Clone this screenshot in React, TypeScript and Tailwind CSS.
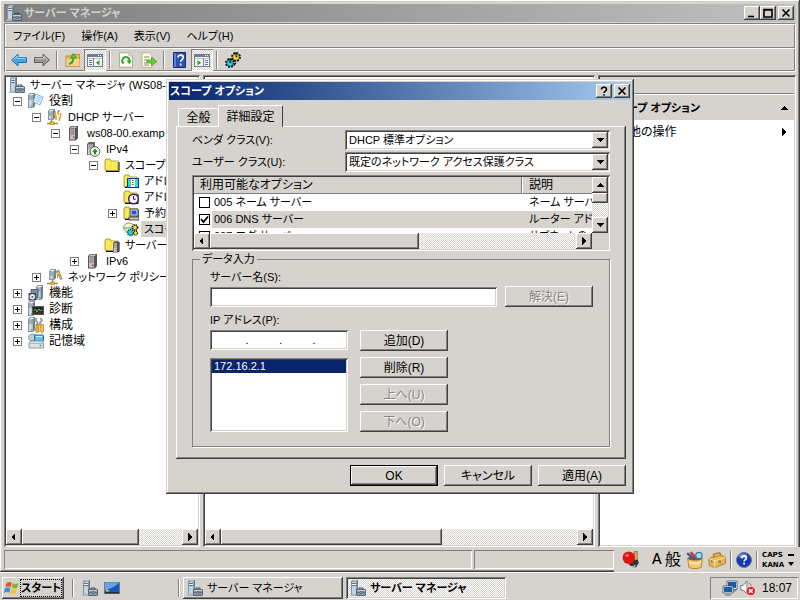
import { useState } from 'react';
import type { ReactNode } from 'react';
import clsx from 'clsx';

// Classic bevels
const RAISED = 'bg-[#d6d3ce] shadow-[inset_-1px_-1px_0_#404040,inset_1px_1px_0_#fff,inset_-2px_-2px_0_#808080]';
const SUNKEN = 'shadow-[inset_1px_1px_0_#808080,inset_-1px_-1px_0_#fff,inset_2px_2px_0_#404040,inset_-2px_-2px_0_#d6d3ce]';
const THIN_SUNKEN = 'shadow-[inset_1px_1px_0_#808080,inset_-1px_-1px_0_#fff]';
const DITHER = 'bg-[conic-gradient(#fff_25%,#d6d3ce_0_50%,#fff_0_75%,#d6d3ce_0)] bg-[length:2px_2px]';

/* ---------- icons ---------- */

function Svg({ children, size = 16 }: { children: ReactNode; size?: number }) {
  return (
    <svg width={size} height={size} viewBox="0 0 16 16" className="shrink-0" aria-hidden="true">
      {children}
    </svg>
  );
}

// Small tower shared by most of the tree icons
function Tower({ x = 0, y = 0, h = 14 }: { x?: number; y?: number; h?: number }) {
  return (
    <g transform={`translate(${x} ${y})`}>
      <path d={`M0 2l2-2h5v${h - 2}l-2 2H0z`} fill="#6f7f8c" />
      <path d={`M.7 2.3h4v${h - 3}h-4z`} fill="#c9d5dd" />
      <path d="M1 2l1.4-1.3h4L5 2z" fill="#eef4f8" />
      <path d="M1 4h3.5M1 6h3.5" stroke="#5d7080" strokeWidth=".8" />
      <path d={`M3 ${h - 3}h1.5v1.5H3z`} fill="#3ccf2c" />
    </g>
  );
}

function ServerManagerIcon() {
  return (
    <Svg>
      <path d="M1 1.500L2.500 0H8v13l-1.500 1.500H1z" fill="#66798a" />
      <path d="M1.700 2h4.600v12H1.700z" fill="#c3d3df" />
      <path d="M2 1.500L3 .6h4.300l-1 .9z" fill="#f2f7fa" />
      <path d="M2.200 3.500h3.600M2.200 5.500h3.600" stroke="#4e6f8c" />
      <path d="M2.200 4.500h3.600" stroke="#f2f7fa" />
      <path d="M0 15l1.500-1.200H8V16H0z" fill="#aab8c3" />
      <path d="M9 9.500V8h4v1.500" fill="none" stroke="#3d4952" />
      <rect x="6.500" y="9.500" width="9" height="6" rx=".6" fill="#8499a9" stroke="#43525e" strokeWidth=".8" />
      <path d="M7 10.500h8" stroke="#c8d5de" />
      <path d="M7 12.500h8" stroke="#56697a" strokeWidth=".8" />
      <path d="M10.200 11.500h1.600v2h-1.600z" fill="#f0f3f5" stroke="#2d363d" strokeWidth=".6" />
    </Svg>
  );
}

function RolesIcon() {
  return (
    <Svg>
      <Tower h={15} />
      <path d="M8 1l7 3-3 8-7-3z" fill="#e4f1fb" stroke="#6aa5d4" strokeWidth=".8" />
      <path d="M9 3.500l4 1.700M8.300 5.300l4 1.700M7.600 7.200l4 1.700" stroke="#7db3de" strokeWidth=".8" />
    </Svg>
  );
}

function DhcpIcon() {
  return (
    <Svg>
      <Tower x={1} h={11} />
      <path d="M8 2v4l1 1v4M11 2v4M13.500 4v4l-1 1v3" stroke="#e79a22" strokeWidth="1.600" fill="none" />
      <path d="M7 1v3M12 1v2" stroke="#70787e" />
      <path d="M4.500 11v3M0 14.500h11" stroke="#b48a35" strokeWidth="1.400" />
      <rect x="3" y="13" width="4" height="3" fill="#f4c44c" stroke="#8b6a20" strokeWidth=".6" />
    </Svg>
  );
}

function HostIcon() {
  return (
    <Svg>
      <path d="M3 3l2-2h7v12l-2 2.500H3z" fill="#555" />
      <path d="M4 3.500h5v11H4z" fill="#c3c3c3" />
      <path d="M4.300 2.800L5.500 1.700h5.500L9.800 2.800z" fill="#ededed" />
      <path d="M4.500 5h4M4.500 7h4M4.500 9h4" stroke="#555" strokeWidth=".8" />
      <path d="M7 11.500h1.500V13H7z" fill="#e01818" />
    </Svg>
  );
}

function IPv4Icon() {
  return (
    <Svg>
      <path d="M2 3l2-2h6v11l-1 2H2z" fill="#666" />
      <path d="M3 3.500h5v10H3z" fill="#cfcfcf" />
      <path d="M3.500 5h4M3.500 7h4" stroke="#666" strokeWidth=".8" />
      <circle cx="10" cy="10.500" r="4.800" fill="#fff" stroke="#444" strokeWidth=".9" />
      <path d="M10 7.500l3 3.200h-1.800v2.600H8.800v-2.600H7z" fill="#14912a" />
    </Svg>
  );
}

function Folder() {
  return (
    <g>
      <path d="M1 4l1-2h4l1 2h7v9.500H1z" fill="#f5e54a" stroke="#9a8d20" strokeWidth=".8" />
      <path d="M2 5h11M2 7h11M2 9h11M2 11h11" stroke="#fffbb0" strokeWidth=".8" strokeDasharray="1 1" />
      <path d="M15 5v9.500H2" fill="none" stroke="#000" />
    </g>
  );
}

function FolderIcon() {
  return <Svg><Folder /></Svg>;
}

function PoolIcon() {
  return (
    <Svg>
      <Folder />
      <rect x="4.500" y="5.500" width="11" height="9" fill="#27d6ee" stroke="#123a8a" />
      <path d="M8 6v8h4V6z" fill="#fff" />
      <path d="M9 7.500h2M9 9.500h2M9 11.500h2" stroke="#c22" strokeDasharray="1 .5" />
    </Svg>
  );
}

function LeaseIcon() {
  return (
    <Svg>
      <Folder />
      <circle cx="10.500" cy="10" r="4.800" fill="#fff" stroke="#3a1470" strokeWidth="1.400" />
      <path d="M10.500 7v3.200h2.300" fill="none" stroke="#222" />
    </Svg>
  );
}

function ReservationIcon() {
  return (
    <Svg>
      <Folder />
      <rect x="7" y="4" width="8" height="7" fill="#e4e4e4" stroke="#222" strokeWidth=".8" />
      <rect x="8.500" y="5.500" width="5" height="4" fill="#1f54d8" />
      <path d="M6 12h10v3H6z" fill="#ccc" stroke="#222" strokeWidth=".8" />
    </Svg>
  );
}

function OptionsIcon() {
  return (
    <Svg>
      <ellipse cx="6" cy="6.500" rx="5.500" ry="4.500" fill="#f6f2c4" stroke="#777" strokeWidth=".8" />
      <path d="M1 7h9" stroke="#3a9" />
      <circle cx="12" cy="6.500" r="2.600" fill="#f2dc1c" stroke="#000" strokeWidth="1.600" strokeDasharray="1.200 .9" />
      <circle cx="7.500" cy="11.500" r="3" fill="#22cfe8" stroke="#0a3d55" strokeWidth="1.600" strokeDasharray="1.300 .9" />
      <circle cx="12.500" cy="12" r="2" fill="#f2dc1c" stroke="#000" strokeWidth="1.200" strokeDasharray="1 .8" />
    </Svg>
  );
}

function ServerFolderIcon() {
  return (
    <Svg>
      <Folder />
      <path d="M9 6l1.500-1.500H15V13l-1.500 2.500H9z" fill="#555" />
      <path d="M9.800 6.300h3v8.500h-3z" fill="#d6d6d6" />
      <path d="M10 8h2.600M10 10h2.600" stroke="#555" strokeWidth=".8" />
      <path d="M11.500 12h1v1h-1z" fill="#e01818" />
    </Svg>
  );
}

function PolicyIcon() {
  return (
    <Svg>
      <Tower x={2} h={11} />
      <path d="M9 3l3-1 3 8-1.500.5L11 5l-.5 4" fill="#e8c071" stroke="#9b6a26" strokeWidth=".7" />
      <path d="M7 5l5-4" stroke="#5a95c8" strokeWidth="1.300" />
      <path d="M5.500 11v3M0 14.500h11" stroke="#b48a35" strokeWidth="1.400" />
      <rect x="4" y="13" width="3.500" height="3" fill="#f4c44c" stroke="#8b6a20" strokeWidth=".6" />
    </Svg>
  );
}

function FeaturesIcon() {
  return (
    <Svg>
      <Tower x={8} h={15} />
      <path d="M3 4.500h7v8H3z" fill="#7b8ca8" stroke="#3f4f6b" strokeWidth=".8" />
      <path d="M.5 8h7.500v7.500H.5z" fill="#444c5a" />
      <circle cx="4.300" cy="11.800" r="2.700" fill="#e8e8ee" />
      <circle cx="4.300" cy="11.800" r=".9" fill="#444" />
    </Svg>
  );
}

function DiagnosticsIcon() {
  return (
    <Svg>
      <Tower h={15} />
      <rect x="4.500" y="5.500" width="11" height="8" fill="#1b2b20" stroke="#565656" />
      <path d="M5.500 10l2-2 1.500 3 2-3 1.500 2 2-1" fill="none" stroke="#4fc94e" />
      <path d="M5.500 12h9" stroke="#b33" strokeWidth=".6" />
    </Svg>
  );
}

function ConfigIcon() {
  return (
    <Svg>
      <Tower h={15} />
      <path d="M8 1v3l1.500 1V8M12 1l2 2-2 3v2" fill="none" stroke="#8a959e" strokeWidth="1.700" />
      <path d="M8 7.500h3v7l-1 1H8.500l-.8-1z" fill="#f0a724" stroke="#a3680e" strokeWidth=".6" />
      <path d="M12.500 7.500h3v7l-1 1H13l-.8-1z" fill="#f7c651" stroke="#a3680e" strokeWidth=".6" />
    </Svg>
  );
}

function StorageIcon() {
  return (
    <Svg>
      <ellipse cx="5" cy="4.500" rx="4.500" ry="3.500" fill="#c4ccd4" stroke="#7a8894" strokeWidth=".8" />
      <rect x="6.500" y="2" width="9" height="6.500" rx="1" fill="#5ec1f0" stroke="#1f6b9d" />
      <path d="M8 3.500h6" stroke="#d9f3ff" />
      <path d="M1 10l2-2h11l1.500 2v5H1z" fill="#dfe4e8" stroke="#77838d" strokeWidth=".8" />
      <path d="M1.500 10.500h14" stroke="#919da7" strokeWidth=".6" />
      <path d="M11.500 12.500h2" stroke="#2dbd2d" strokeWidth="1.500" />
    </Svg>
  );
}

function BackIcon() {
  return (
    <Svg>
      <path d="M.6 8L7 2v3.500h8.500v5H7V14z" fill="#3ea7e6" stroke="#1668ae" strokeWidth=".9" strokeLinejoin="round" />
      <path d="M2.300 7.700L6.200 4v2.300h8.500" fill="none" stroke="#a4dcfb" />
    </Svg>
  );
}

function ForwardIcon() {
  return (
    <Svg>
      <path d="M15.400 8L9 2v3.500H.5v5H9V14z" fill="#999" stroke="#555" strokeWidth=".9" strokeLinejoin="round" />
      <path d="M1.300 6.400h8.500V4l4 3.800" fill="none" stroke="#ccc" />
    </Svg>
  );
}

function UpFolderIcon() {
  return (
    <Svg>
      <path d="M1 4h5l1-1.500h7.500V14.500H1z" fill="#efbb5c" stroke="#b98123" strokeWidth=".8" />
      <path d="M1.500 7h13v7.200h-13z" fill="#f8d48a" />
      <path d="M4 12c3.500-1 4.500-3 4.300-6" fill="none" stroke="#3aa81c" strokeWidth="2" />
      <path d="M5 6.500L8.500 1.500l3.500 4.300z" fill="#52cc2b" stroke="#2d8a12" strokeWidth=".6" />
    </Svg>
  );
}

// Window with a narrow tree pane on the left and an arrow in the right part
function PaneIcon({ flip }: { flip?: boolean }) {
  return (
    <Svg>
      <g shapeRendering="crispEdges">
        <rect x=".5" y="2.500" width="15" height="12" fill="#f6f6f6" stroke="#777f8c" />
        <path d="M1 3h14v2H1z" fill="#6d7b93" />
        <path d="M11 3h1v1h-1zM13 3h1v1h-1z" fill="#fff" />
        <path d="M1 6.500h14" stroke="#b9bfc9" />
      </g>
      <g transform={flip ? 'translate(16 0) scale(-1 1)' : undefined}>
        <path d="M6.500 6v8.500" stroke="#777f8c" />
        <path d="M2 8.500h3M2 10.500h3M2 12.500h3" stroke="#4f7ab4" />
        <path d="M12.500 8v5.500L9 10.700z" fill="#27a321" />
      </g>
    </Svg>
  );
}

function RefreshIcon() {
  return (
    <Svg>
      <path d="M1.500.8h9.700l3.300 3.200v11.200h-13z" fill="#fdfdf6" stroke="#a9a48d" strokeWidth=".9" />
      <path d="M11 .8V4h3.500" fill="#e5e2d2" stroke="#a9a48d" strokeWidth=".7" />
      <path d="M5.600 11.500A3.600 3.600 0 1 1 11.300 9.800" fill="none" stroke="#31a82b" strokeWidth="2" />
      <path d="M8.500 8.500h5L11.500 12.500z" fill="#31a82b" />
    </Svg>
  );
}

function ExportIcon() {
  return (
    <Svg>
      <path d="M1 .8h7.500L11 3.500v11.700H1z" fill="#fffbe6" stroke="#b9ad80" strokeWidth=".9" />
      <path d="M3 5h5.500M3 8h3M3 11h3M3 13h5" stroke="#8d8b7a" />
      <path d="M6 8h4.500V5.300L15.700 9.500l-5.200 4.200V11H6z" fill="#69cf3f" stroke="#34901a" strokeWidth=".7" />
    </Svg>
  );
}

function HelpBookIcon() {
  return (
    <Svg>
      <path d="M1.500.5h12v15h-12z" fill="#2c4fb8" stroke="#142c77" />
      <path d="M2 1h2v14H2z" fill="#5d82e0" />
      <path d="M6 5.500C6 2.200 11.300 2.300 11.300 5.500c0 2-2.600 2.100-2.600 4.300M8.700 11.500v2" fill="none" stroke="#fff" strokeWidth="1.700" />
    </Svg>
  );
}

function GearsIcon() {
  return (
    <Svg>
      <circle cx="11" cy="5" r="3.700" fill="none" stroke="#000" strokeWidth="2.400" strokeDasharray="1.600 1.300" />
      <circle cx="11" cy="5" r="3.300" fill="#f4e11a" stroke="#000" strokeWidth=".5" />
      <path d="M11 0v5l1.500-1" fill="none" stroke="#000" />
      <circle cx="5" cy="11" r="3.700" fill="none" stroke="#000" strokeWidth="2.400" strokeDasharray="1.600 1.300" />
      <circle cx="5" cy="11" r="3.300" fill="#25d3e8" stroke="#000" strokeWidth=".5" />
      <path d="M5 6v5l1.500-1M11 10.500l-2 3.500" fill="none" stroke="#000" />
    </Svg>
  );
}

function WindowsFlag() {
  return (
    <Svg>
      <path d="M2.500 3C4.500 1.500 6 1.800 7.800 2.800L6.700 7.300C5 6.300 3.300 6.300 1.300 7.300z" fill="#e8562a" />
      <path d="M8.700 3.200c2 1 3.600.9 5.800-.3l-1.200 4.500c-1.900 1.200-3.700 1.200-5.700.2z" fill="#7cb928" />
      <path d="M1 8.300c2-1.200 3.600-1 5.400 0L5.300 12.800C3.700 11.800 2 11.800 0 12.900z" fill="#3c8fd8" />
      <path d="M7.300 8.700c2 1 3.600 1 5.700-.2l-1.200 4.600c-2 1.200-3.800 1.200-5.700.1z" fill="#f9c325" />
    </Svg>
  );
}

function DesktopIcon() {
  return (
    <Svg>
      <rect x=".5" y="2.500" width="15" height="11" fill="#1c56b8" stroke="#6f7780" />
      <path d="M1 10c5-1 9-3 14-7v-.5H1z" fill="#5fa6ee" />
      <path d="M1 12h14v1.500H1z" fill="#232d3a" />
      <path d="M2 9.500h2v2H2z" fill="#f7c522" />
      <path d="M4 10h1.500v1.500H4z" fill="#6bc53c" />
    </Svg>
  );
}

function BrushIcon() {
  return (
    <Svg size={18}>
      <path d="M11 .5h2.500v7.500H11z" fill="#e1b65a" stroke="#6b4a14" strokeWidth=".6" />
      <path d="M10 8h4l1 2.500-2.500 4H9L6 12z" fill="#333" />
      <path d="M6 12.500c2 2 4.500 2 6 0" stroke="#ccc" fill="none" />
      <circle cx="6" cy="6" r="5.500" fill="#e11414" />
      <ellipse cx="4.500" cy="4" rx="1.800" ry="1.200" fill="#f77" />
    </Svg>
  );
}

function PenPotIcon() {
  return (
    <Svg size={18}>
      <path d="M1.500 6.500l1 8c3 1.500 8 1.500 11 0l1-8z" fill="#f6c877" stroke="#b57a22" strokeWidth=".8" />
      <ellipse cx="8" cy="6.500" rx="6.500" ry="2" fill="#8c5b19" />
      <path d="M1 2l7 5.500" stroke="#2b56c4" strokeWidth="2" />
      <path d="M4 1l6 6" stroke="#d4371d" strokeWidth="2" />
      <circle cx="11.500" cy="4" r="2.800" fill="#9fdcf8" stroke="#3577a8" />
      <path d="M2.500 10c3 1.200 8 1.200 11 0" stroke="#fff0c8" fill="none" />
    </Svg>
  );
}

function ToolboxIcon() {
  return (
    <Svg size={18}>
      <path d="M5 5V3l5-1.500 1 .8V4" fill="none" stroke="#b6781b" strokeWidth="1.300" />
      <path d="M.8 6.500L11 3.500l4.500 2V11L6 14.800l-5-2z" fill="#f0b44c" stroke="#b6781b" strokeWidth=".8" />
      <path d="M.8 6.500L6 8.800l9.500-3.300M6 8.800v6" fill="none" stroke="#fbe0a0" />
      <path d="M9.500 8h2v2.800h-2z" fill="#8c8c8c" />
      <path d="M2.500 8h1.500v2.500H2.500z" fill="#8c8c8c" />
    </Svg>
  );
}

function HelpBallIcon() {
  return (
    <Svg>
      <circle cx="8" cy="8" r="7.500" fill="#1437b8" stroke="#71767e" />
      <ellipse cx="7" cy="4" rx="4.500" ry="2.500" fill="#5f83e8" />
      <path d="M5.700 6.200C5.700 3.200 10.400 3.300 10.400 6c0 1.600-2.300 1.800-2.300 3.500M8.100 10.800v1.800" fill="none" stroke="#fff" strokeWidth="1.700" />
    </Svg>
  );
}

function NetworkIcon() {
  return (
    <Svg>
      <rect x="5.500" y="1.500" width="9" height="7" fill="#1a5c9e" stroke="#fff" />
      <path d="M5 1h10v8.500H5zM8 11h6" fill="none" stroke="#174066" strokeWidth=".7" />
      <rect x="1.500" y="6.500" width="9" height="6" fill="#1a5c9e" stroke="#fff" />
      <path d="M1 6h10v7H1zM3 15h6" fill="none" stroke="#174066" strokeWidth=".7" />
    </Svg>
  );
}

function MutedIcon() {
  return (
    <Svg>
      <path d="M.8 5.500H3L7 1v13L3 10H.8z" fill="#f4f4f4" stroke="#666" strokeWidth=".8" />
      <path d="M9 3c1.500 1 2 2 2.300 3.500" fill="none" stroke="#777" />
      <circle cx="10.800" cy="11" r="4.600" fill="#dc2727" stroke="#fff" strokeWidth=".5" />
      <path d="M9 9.200l3.600 3.600M12.600 9.200L9 12.800" stroke="#fff" strokeWidth="1.500" />
    </Svg>
  );
}

function Arrow({ dir }: { dir: 'left' | 'right' | 'up' | 'down' }) {
  const d = {
    left: 'M5 0v8L1 4z',
    right: 'M2 0v8l4-4z',
    up: 'M0 6h8L4 2z',
    down: 'M0 2h8L4 6z',
  }[dir];
  return (
    <svg width="8" height="8" viewBox="0 0 8 8" aria-hidden="true" shapeRendering="crispEdges">
      <path d={d} fill="#000" />
    </svg>
  );
}

/* ---------- small parts ---------- */

function ArrowButton({ dir, label }: { dir: 'left' | 'right' | 'up' | 'down'; label: string }) {
  return (
    <button type="button" aria-label={label} className={clsx('flex size-4 shrink-0 items-center justify-center', RAISED)}>
      <Arrow dir={dir} />
    </button>
  );
}

function HScroll({ thumb }: { thumb: string }) {
  return (
    <div className={clsx('flex h-4 shrink-0', DITHER)}>
      <ArrowButton dir="left" label="左へスクロール" />
      <div className="flex-1">
        <div className={clsx('h-full', RAISED, thumb)} />
      </div>
      <ArrowButton dir="right" label="右へスクロール" />
    </div>
  );
}

function CaptionButton({ label, path }: { label: string; path: string }) {
  return (
    <button type="button" aria-label={label} className={clsx('flex h-3.5 w-4 items-center justify-center', RAISED)}>
      <svg width="10" height="10" viewBox="0 0 10 10" aria-hidden="true">
        <path d={path} fill="none" stroke="#000" strokeWidth="1.600" />
      </svg>
    </button>
  );
}

const CLOSE = 'M1.500 1.500l7 7M8.500 1.500l-7 7';

function PushButton({ children, disabled, isDefault }: { children: ReactNode; disabled?: boolean; isDefault?: boolean }) {
  return (
    <button
      type="button"
      disabled={disabled}
      className={clsx(
        'h-[21px] w-[88px] shrink-0 text-center text-xs',
        RAISED,
        isDefault ? 'border border-black leading-[18px]' : 'leading-5',
        disabled && 'text-[#868686] [text-shadow:1px_1px_0_#fff]',
      )}
    >
      {children}
    </button>
  );
}

function Divider() {
  return <div className="h-[18px] w-0.5 border-r border-r-white bg-[#808080]" />;
}

function DropDown({ id, label, value }: { id: string; label: string; value: string }) {
  return (
    <div className="flex h-5 items-center">
      <label htmlFor={id} className="w-[153px] leading-4">{label}</label>
      <div className={clsx('relative h-full flex-1 bg-white p-0.5', SUNKEN)}>
        <select id={id} defaultValue={value} className="block h-4 w-full appearance-none pl-0.5 leading-4 outline-none">
          <option>{value}</option>
        </select>
        <span className={clsx('pointer-events-none absolute top-0.5 right-0.5 flex size-4 items-center justify-center', RAISED)}>
          <Arrow dir="down" />
        </span>
      </div>
    </div>
  );
}

/* ---------- console tree ---------- */

const INDENT = ['pl-[3px]', 'pl-[7px] text-xs', 'pl-[26px]', 'pl-[45px]', 'pl-[64px]', 'pl-[83px]', 'pl-[102px]'];

type Node = { level: number; text: string; icon: ReactNode; box?: '+' | '-'; selected?: boolean };

const TREE: Node[] = [
  { level: 0, text: 'サーバー マネージャ (WS08-0', icon: <ServerManagerIcon /> },
  { level: 1, text: '役割', icon: <RolesIcon />, box: '-' },
  { level: 2, text: 'DHCP サーバー', icon: <DhcpIcon />, box: '-' },
  { level: 3, text: 'ws08-00.examp', icon: <HostIcon />, box: '-' },
  { level: 4, text: 'IPv4', icon: <IPv4Icon />, box: '-' },
  { level: 5, text: 'スコープ', icon: <FolderIcon />, box: '-' },
  { level: 6, text: 'アドレ', icon: <PoolIcon /> },
  { level: 6, text: 'アドレ', icon: <LeaseIcon /> },
  { level: 6, text: '予約', icon: <ReservationIcon />, box: '+' },
  { level: 6, text: 'スコー', icon: <OptionsIcon />, selected: true },
  { level: 5, text: 'サーバー', icon: <ServerFolderIcon /> },
  { level: 4, text: 'IPv6', icon: <HostIcon />, box: '+' },
  { level: 2, text: 'ネットワーク ポリシーと', icon: <PolicyIcon />, box: '+' },
  { level: 1, text: '機能', icon: <FeaturesIcon />, box: '+' },
  { level: 1, text: '診断', icon: <DiagnosticsIcon />, box: '+' },
  { level: 1, text: '構成', icon: <ConfigIcon />, box: '+' },
  { level: 1, text: '記憶域', icon: <StorageIcon />, box: '+' },
];

function TreeRow({ node }: { node: Node }) {
  return (
    <li className={clsx('flex h-4 items-center whitespace-nowrap', INDENT[node.level])}>
      {node.level > 0 && (
        <span className="mr-1.5 size-[9px] shrink-0">
          {node.box && (
            <svg width="9" height="9" viewBox="0 0 9 9" shapeRendering="crispEdges" aria-hidden="true">
              <rect x=".5" y=".5" width="8" height="8" fill="#fff" stroke="#808080" />
              <path d={node.box === '+' ? 'M2 4.500h5M4.500 2v5' : 'M2 4.500h5'} stroke="#000" />
            </svg>
          )}
        </span>
      )}
      {node.icon}
      <span className={clsx('ml-0.5 pr-0.5 pl-[3px] leading-4', node.selected && 'bg-[#d6d3ce]')}>{node.text}</span>
    </li>
  );
}

/* ---------- dialog ---------- */

const OPTIONS = [
  { name: '005 ネーム サーバー', desc: 'ネーム サーバ', checked: false },
  { name: '006 DNS サーバー', desc: 'ルーター アド', checked: true },
  { name: '007 ログ サーバー', desc: 'サブネットの', checked: false },
];

function OptionsList() {
  const [checked, setChecked] = useState(OPTIONS.map(o => o.checked));

  return (
    <div className={clsx('mt-[3px] flex h-[76px] flex-col bg-white p-0.5', SUNKEN)}>
      <div className="flex min-h-0 flex-1">
        <div className="flex-1 overflow-hidden">
          <table className="w-full table-fixed border-separate border-spacing-0 text-left whitespace-nowrap">
            <thead>
              <tr className="bg-[#d6d3ce]">
                <th className="w-[328px] border-r border-b border-[#808080] p-0 pl-1.5 text-xs leading-4 font-normal">利用可能なオプション</th>
                <th className="border-b border-l border-b-[#808080] border-l-white p-0 pl-1.5 text-xs leading-4 font-normal">説明</th>
              </tr>
            </thead>
            <tbody>
              {OPTIONS.map((o, i) => (
                <tr key={o.name}>
                  <td className="p-0">
                    <label className="flex h-[17px] items-center pl-[5px]">
                      <input
                        type="checkbox"
                        checked={checked[i]}
                        onChange={() => setChecked(checked.map((c, j) => (j === i ? !c : c)))}
                        className="size-[11px] appearance-none border border-black bg-white checked:bg-[url('data:image/svg+xml,%3Csvg%20xmlns=%22http://www.w3.org/2000/svg%22%20viewBox=%220%200%209%209%22%3E%3Cpath%20d=%22M1%204l2.500%203L8%201.500%22%20fill=%22none%22%20stroke=%22black%22%20stroke-width=%221.800%22/%3E%3C/svg%3E')]"
                      />
                      <span className={clsx('ml-0.5 flex-1 pl-0.5 leading-[17px]', i === 1 && 'bg-[#d6d3ce]')}>{o.name}</span>
                    </label>
                  </td>
                  <td className={clsx('p-0 pl-[7px] leading-[17px]', i === 1 && 'bg-[#d6d3ce]')}>{o.desc}</td>
                </tr>
              ))}
            </tbody>
          </table>
        </div>
        <div className={clsx('flex w-4 flex-col', DITHER)}>
          <ArrowButton dir="up" label="上へスクロール" />
          <div className="flex-1">
            <div className={clsx('h-2.5', RAISED)} />
          </div>
          <ArrowButton dir="down" label="下へスクロール" />
        </div>
      </div>
      <div className="flex bg-[#d6d3ce]">
        <div className="flex-1">
          <HScroll thumb="w-[57%]" />
        </div>
        <div className="w-4" />
      </div>
    </div>
  );
}

function ScopeOptionsDialog() {
  return (
    <div
      role="dialog"
      aria-labelledby="dialog-title"
      className="absolute top-[79px] left-[166px] w-[468px] bg-[#d6d3ce] p-[3px] shadow-[inset_-1px_-1px_0_#404040,inset_1px_1px_0_#d6d3ce,inset_-2px_-2px_0_#808080,inset_2px_2px_0_#fff]"
    >
      <div className="flex h-[18px] items-center bg-linear-to-r from-[#0a246a] to-[#a6caf0] px-px">
        <h2 id="dialog-title" className="flex-1 font-bold text-white">スコープ オプション</h2>
        <div className="flex gap-0.5">
          <CaptionButton label="ヘルプ" path="M2.500 3.500c0-3 5-3 5 0C7.500 5.300 5 5 5 7M5 8.200v1.600" />
          <CaptionButton label="閉じる" path={CLOSE} />
        </div>
      </div>

      <div className="pt-[5px] pr-[5px] pb-[5px] pl-[7px]">
        <div role="tablist" className="flex h-[21px] items-end pl-0.5 text-xs">
          <button type="button" role="tab" aria-selected="false" className="h-[18px] w-10 rounded-t-xs border-t border-l border-white leading-[18px]">
            全般
          </button>
          <button
            type="button"
            role="tab"
            aria-selected="true"
            className="relative -mb-px h-[22px] w-[65px] rounded-t-xs border-t border-r border-l border-white border-r-[#404040] bg-[#d6d3ce] leading-5"
          >
            詳細設定
          </button>
        </div>

        <div role="tabpanel" className="px-4 pt-1 pb-3 shadow-[inset_-1px_-1px_0_#404040,inset_1px_1px_0_#fff,inset_-2px_-2px_0_#808080]">
          <div className="flex flex-col gap-0.5">
            <DropDown id="vendor" label="ベンダ クラス(V):" value="DHCP 標準オプション" />
            <DropDown id="user" label="ユーザー クラス(U):" value="既定のネットワーク アクセス保護クラス" />
          </div>

          <OptionsList />

          <fieldset className="mt-px border border-[#808080] pr-4 pb-3.5 pl-[17px] shadow-[1px_1px_0_#fff]">
            <legend className="-ml-2.5 h-3.5 px-0.5 leading-3.5">データ入力</legend>
            <label htmlFor="server" className="mt-1 block leading-3.5">サーバー名(S):</label>
            <div className="mt-0.5 flex items-center gap-2">
              <input id="server" type="text" className={clsx('h-5 min-w-0 flex-1 bg-white px-1 outline-none', SUNKEN)} />
              <PushButton disabled>解決(E)</PushButton>
            </div>
            <label htmlFor="ip0" className="mt-1.5 block leading-3.5">IP アドレス(P):</label>
            <div className="mt-[3px] flex gap-3">
              <div className="flex w-[138px] flex-col gap-2">
                <div className={clsx('flex h-5 items-center bg-white px-0.5', SUNKEN)}>
                  {[0, 1, 2, 3].map(i => (
                    <div key={i} className="flex min-w-0 flex-1">
                      {i > 0 && <span>.</span>}
                      <input id={`ip${i}`} type="text" aria-label={`IP アドレス ${i + 1}`} maxLength={3} className="w-full min-w-0 text-center outline-none" />
                    </div>
                  ))}
                </div>
                <ul role="listbox" aria-label="IP アドレス" className={clsx('flex-1 bg-white p-0.5', SUNKEN)}>
                  <li role="option" aria-selected="true" className="bg-[#0a246a] pl-0.5 leading-[13px] text-white">172.16.2.1</li>
                </ul>
              </div>
              <div className="flex flex-col gap-1.5">
                <PushButton>追加(D)</PushButton>
                <PushButton>削除(R)</PushButton>
                <PushButton disabled>上へ(U)</PushButton>
                <PushButton disabled>下へ(O)</PushButton>
              </div>
            </div>
          </fieldset>
        </div>

        <div className="mt-1.5 flex justify-end gap-1.5">
          <PushButton isDefault>OK</PushButton>
          <PushButton>キャンセル</PushButton>
          <PushButton>適用(A)</PushButton>
        </div>
      </div>
    </div>
  );
}

/* ---------- main window ---------- */

function ToolButton({ label, pressed, children }: { label: string; pressed?: boolean; children: ReactNode }) {
  return (
    <button
      type="button"
      aria-label={label}
      className={clsx('flex h-[22px] items-center justify-center', pressed ? ['w-[22px]', DITHER, THIN_SUNKEN] : 'w-[23px]')}
    >
      {children}
    </button>
  );
}

function ToolDivider() {
  return <div className="mx-[3px]"><Divider /></div>;
}

function Toolbar() {
  return (
    <div className="flex h-6 items-center border-t border-[#808080] pl-0.5 shadow-[inset_0_1px_0_#fff]">
      <ToolButton label="戻る"><BackIcon /></ToolButton>
      <ToolButton label="進む"><ForwardIcon /></ToolButton>
      <ToolDivider />
      <ToolButton label="上へ"><UpFolderIcon /></ToolButton>
      <ToolButton label="ツリーの表示" pressed><PaneIcon /></ToolButton>
      <ToolDivider />
      <ToolButton label="更新"><RefreshIcon /></ToolButton>
      <ToolButton label="エクスポート"><ExportIcon /></ToolButton>
      <ToolDivider />
      <ToolButton label="ヘルプ"><HelpBookIcon /></ToolButton>
      <ToolButton label="操作ウィンドウの表示" pressed><PaneIcon flip /></ToolButton>
      <ToolDivider />
      <ToolButton label="オプションの構成"><GearsIcon /></ToolButton>
    </div>
  );
}

function LanguageBar() {
  return (
    <div className="-mr-1 flex w-[186px] items-center bg-[#d6d3ce] pl-2">
      <BrushIcon />
      <span className="ml-3 w-3 font-['Liberation_Mono'] text-base leading-5">A</span>
      <span className="w-[22px] pl-px text-base leading-5">般</span>
      <PenPotIcon />
      <span className="ml-1"><ToolboxIcon /></span>
      <div className="mx-1"><Divider /></div>
      <HelpBallIcon />
      <div className="mx-1"><Divider /></div>
      <div className="w-[26px] font-['DejaVu_Sans'] text-[7px] leading-[10px] font-bold">
        <div>CAPS</div>
        <div>KANA</div>
      </div>
      <div className="flex flex-col items-center gap-1.5">
        <span className="h-0.5 w-1.5 bg-black" />
        <svg width="6" height="4" viewBox="0 0 6 4" aria-hidden="true"><path d="M0 0h6L3 4z" /></svg>
      </div>
    </div>
  );
}

function MainWindow() {
  return (
    <div className={clsx('flex min-h-0 flex-1 flex-col px-1 pt-1', RAISED)}>
      <div className="flex h-[18px] items-center bg-linear-to-r from-[#808080] to-[#c0c0c0] px-0.5">
        <ServerManagerIcon />
        <h1 className="ml-0.5 flex-1 font-bold text-[#d6d3ce]">サーバー マネージャ</h1>
        <div className="flex">
          <CaptionButton label="最小化" path="M1 8.500h6" />
          <CaptionButton label="最大化" path="M1 1.500h8v7.500H1zM1 2h8" />
        </div>
        <div className="ml-0.5"><CaptionButton label="閉じる" path={CLOSE} /></div>
      </div>

      <div className="mt-px border border-t-[#808080] border-r-white border-b-white border-l-[#808080] shadow-[inset_1px_1px_0_#fff,inset_-1px_-1px_0_#808080]">
        <nav className="flex h-[23px] items-center gap-4 pl-2">
          {['ファイル(F)', '操作(A)', '表示(V)', 'ヘルプ(H)'].map(m => (
            <button key={m} type="button">{m}</button>
          ))}
        </nav>
        <Toolbar />
      </div>

      <div className="mt-[3px] grid min-h-0 flex-1 grid-cols-[196px_minmax(0,1fr)_198px] gap-[3px]">
        <div className={clsx('flex min-h-0 flex-col bg-white p-0.5', SUNKEN)}>
          <ul className="flex-1 overflow-hidden">
            {TREE.map((n, i) => <TreeRow key={i} node={n} />)}
          </ul>
          <HScroll thumb="w-[73%]" />
        </div>

        <div className={clsx('flex flex-col justify-end bg-white p-0.5', SUNKEN)}>
          <HScroll thumb="w-[62%]" />
        </div>

        <div className={clsx('flex flex-col bg-white p-0.5', SUNKEN)}>
          <div className="h-[17px] border-b border-[#808080] bg-[#d6d3ce]" />
          <div className="flex h-[26px] items-center justify-between border-t border-white bg-[#d6d3ce] pr-1.5 pl-1.5">
            <span className="font-bold">スコープ オプション</span>
            <Arrow dir="up" />
          </div>
          <div className="flex h-6 items-center justify-between pr-1.5 pl-[29px] text-xs">
            <span>他の操作</span>
            <Arrow dir="right" />
          </div>
        </div>
      </div>

      <div className="flex h-[25px]">
        <div className="flex flex-1 gap-0.5 pt-[3px] pb-[3px]">
          <div className={clsx('flex-[469]', THIN_SUNKEN)} />
          <div className={clsx('flex-[140]', THIN_SUNKEN)} />
        </div>
        <LanguageBar />
      </div>
    </div>
  );
}

function Taskbar() {
  return (
    <div className="flex h-7 shrink-0 items-center border-t border-white bg-[#d6d3ce] pt-0.5 pl-0.5 whitespace-nowrap">
      <button type="button" className={clsx('flex h-[22px] w-[62px] items-center pl-0.5 font-bold', RAISED)}>
        <WindowsFlag />
        <span className="border border-dotted border-black leading-4">スタート</span>
      </button>
      <div className="ml-2"><Divider /></div>
      <button type="button" aria-label="サーバー マネージャ" className="ml-2 flex size-[18px] items-center"><ServerManagerIcon /></button>
      <button type="button" aria-label="デスクトップの表示" className="ml-1 flex size-[18px] items-center"><DesktopIcon /></button>
      <div className="ml-14"><Divider /></div>
      <button type="button" className={clsx('ml-[3px] flex h-[22px] w-40 items-center gap-1 pl-1', RAISED)}>
        <ServerManagerIcon />
        サーバー マネージャ
      </button>
      <button type="button" aria-pressed="true" className={clsx('ml-[3px] flex h-[22px] w-40 items-center gap-1 pl-1 font-bold', DITHER, SUNKEN)}>
        <ServerManagerIcon />
        サーバー マネージャ
      </button>
      <div className={clsx('mr-0.5 ml-auto flex h-[22px] w-[88px] items-center gap-0.5 pl-3 text-xs', THIN_SUNKEN)}>
        <NetworkIcon />
        <MutedIcon />
        <span className="ml-1">18:07</span>
      </div>
    </div>
  );
}

export default function App() {
  return (
    <div className="relative flex h-screen min-h-[560px] flex-col overflow-hidden bg-[#d6d3ce] font-['Liberation_Sans','Noto_Sans_CJK_JP',sans-serif] text-[11px] leading-4 text-black [font-feature-settings:'palt']">
      <MainWindow />
      <ScopeOptionsDialog />
      <Taskbar />
    </div>
  );
}
